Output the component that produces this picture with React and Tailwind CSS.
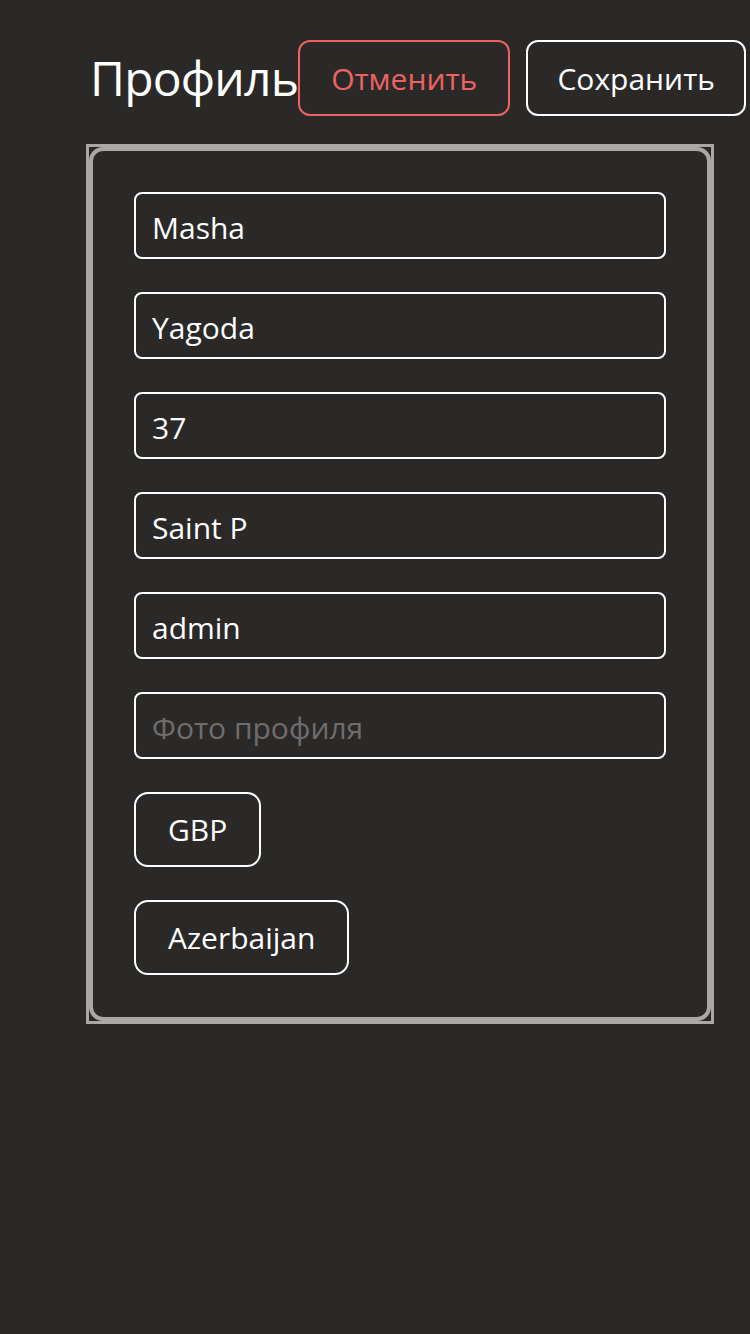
import React, { useState } from 'react'

function Field({ value, placeholder, onChange, name }) {
    return (
        <input
            type="text"
            name={name}
            value={value}
            placeholder={placeholder}
            onChange={onChange}
            className="w-full h-[67px] px-4 pt-1 border-2 border-white rounded-lg bg-transparent text-white text-[30px] outline-none placeholder:text-[#6f6d6c]"
        />
    )
}

function App() {
    const [profile, setProfile] = useState({
        firstName: 'Masha',
        lastName: 'Yagoda',
        age: '37',
        city: 'Saint P',
        role: 'admin',
        photo: '',
    })
    const onInputChange = (e) => {
        const { name, value } = e.target;
        setProfile((prev) => ({ ...prev, [name]: value }))
    }

    return (
        <div
            className="w-[750px] h-[1334px] bg-[#2a2928] text-white"
            style={{ fontFamily: '"Open Sans", "Noto Sans", sans-serif' }}
        >
            <div className="flex items-center pt-10 pl-[90px]">
                <h1 className="text-[48px] leading-none font-normal tracking-[-0.8px]">Профиль</h1>
                <button className="w-[212px] h-[76px] border-2 border-[#ef6262] rounded-xl text-[#ef6262] text-[30px]">
                    Отменить
                </button>
                <button className="ml-4 w-[220px] h-[76px] border-2 border-white rounded-xl text-white text-[30px]">
                    Сохранить
                </button>
            </div>

            <div className="mt-7 ml-[86px] w-[628px] border-[3px] border-[#aaa7a5]">
                <div className="border-4 border-[#aaa7a5] rounded-[14px] px-[41px] pt-[41px] pb-[42px] flex flex-col gap-[33px]">
                    <Field name="firstName" value={profile.firstName} onChange={onInputChange} />
                    <Field name="lastName" value={profile.lastName} onChange={onInputChange} />
                    <Field name="age" value={profile.age} onChange={onInputChange} />
                    <Field name="city" value={profile.city} onChange={onInputChange} />
                    <Field name="role" value={profile.role} onChange={onInputChange} />
                    <Field name="photo" value={profile.photo} placeholder="Фото профиля" onChange={onInputChange} />
                    <div>
                        <button className="h-[75px] px-8 border-2 border-white rounded-[14px] text-[30px]">
                            GBP
                        </button>
                    </div>
                    <div>
                        <button className="h-[75px] px-8 border-2 border-white rounded-[14px] text-[30px]">
                            Azerbaijan
                        </button>
                    </div>
                </div>
            </div>
        </div>
    )
}

export default App
